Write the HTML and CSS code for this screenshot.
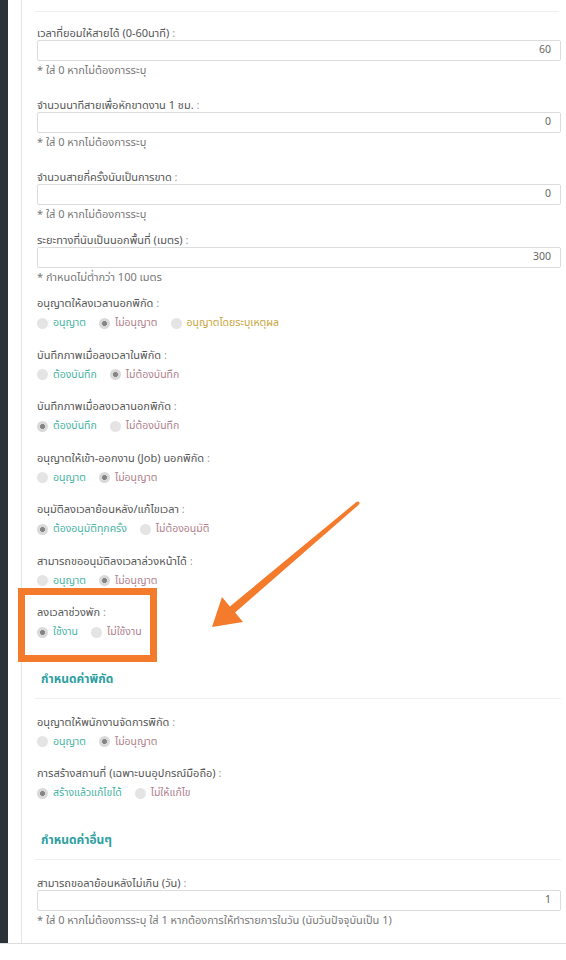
FILE: index.html
```html
<!DOCTYPE html>
<html lang="th">
<head>
<meta charset="utf-8">
<title>ตั้งค่า</title>
<link rel="stylesheet" href="styles.css">
</head>
<body>
<div class="screen">
  <aside class="rail"></aside>
  <main class="panel">
    <div class="content">
      <div class="rule"></div>

      <div class="field">
        <div class="label">เวลาที่ยอมให้สายได้ (0-60นาที) <span class="colon">:</span></div>
        <div class="input">60</div>
        <div class="help">* ใส่ 0 หากไม่ต้องการระบุ</div>
      </div>

      <div class="field">
        <div class="label">จำนวนนาทีสายเพื่อหักขาดงาน 1 ชม. <span class="colon">:</span></div>
        <div class="input">0</div>
        <div class="help">* ใส่ 0 หากไม่ต้องการระบุ</div>
      </div>

      <div class="field field-tight">
        <div class="label">จำนวนสายกี่ครั้งนับเป็นการขาด <span class="colon">:</span></div>
        <div class="input">0</div>
        <div class="help">* ใส่ 0 หากไม่ต้องการระบุ</div>
      </div>

      <div class="field field-tight">
        <div class="label">ระยะทางที่นับเป็นนอกพื้นที่ (เมตร) <span class="colon">:</span></div>
        <div class="input">300</div>
        <div class="help">* กำหนดไม่ต่ำกว่า 100 เมตร</div>
      </div>

      <div class="choice">
        <div class="label">อนุญาตให้ลงเวลานอกพิกัด <span class="colon">:</span></div>
        <div class="options">
          <span class="opt"><span class="dot"></span><span class="t-yes">อนุญาต</span></span>
          <span class="opt"><span class="dot on"></span><span class="t-no">ไม่อนุญาต</span></span>
          <span class="opt"><span class="dot"></span><span class="t-gold">อนุญาตโดยระบุเหตุผล</span></span>
        </div>
      </div>

      <div class="choice">
        <div class="label">บันทึกภาพเมื่อลงเวลาในพิกัด <span class="colon">:</span></div>
        <div class="options">
          <span class="opt"><span class="dot"></span><span class="t-yes">ต้องบันทึก</span></span>
          <span class="opt"><span class="dot on"></span><span class="t-no">ไม่ต้องบันทึก</span></span>
        </div>
      </div>

      <div class="choice">
        <div class="label">บันทึกภาพเมื่อลงเวลานอกพิกัด <span class="colon">:</span></div>
        <div class="options">
          <span class="opt"><span class="dot on"></span><span class="t-yes">ต้องบันทึก</span></span>
          <span class="opt"><span class="dot"></span><span class="t-no">ไม่ต้องบันทึก</span></span>
        </div>
      </div>

      <div class="choice">
        <div class="label">อนุญาตให้เข้า-ออกงาน (Job) นอกพิกัด <span class="colon">:</span></div>
        <div class="options">
          <span class="opt"><span class="dot"></span><span class="t-yes">อนุญาต</span></span>
          <span class="opt"><span class="dot on"></span><span class="t-no">ไม่อนุญาต</span></span>
        </div>
      </div>

      <div class="choice">
        <div class="label">อนุมัติลงเวลาย้อนหลัง/แก้ไขเวลา <span class="colon">:</span></div>
        <div class="options">
          <span class="opt"><span class="dot on"></span><span class="t-yes">ต้องอนุมัติทุกครั้ง</span></span>
          <span class="opt"><span class="dot"></span><span class="t-no">ไม่ต้องอนุมัติ</span></span>
        </div>
      </div>

      <div class="choice">
        <div class="label">สามารถขออนุมัติลงเวลาล่วงหน้าได้ <span class="colon">:</span></div>
        <div class="options">
          <span class="opt"><span class="dot"></span><span class="t-yes">อนุญาต</span></span>
          <span class="opt"><span class="dot on"></span><span class="t-no">ไม่อนุญาต</span></span>
        </div>
      </div>

      <div class="choice">
        <div class="label">ลงเวลาช่วงพัก <span class="colon">:</span></div>
        <div class="options">
          <span class="opt"><span class="dot on"></span><span class="t-yes">ใช้งาน</span></span>
          <span class="opt"><span class="dot"></span><span class="t-no">ไม่ใช้งาน</span></span>
        </div>
      </div>

      <h3 class="section">กำหนดค่าพิกัด</h3>

      <div class="choice">
        <div class="label">อนุญาตให้พนักงานจัดการพิกัด <span class="colon">:</span></div>
        <div class="options">
          <span class="opt"><span class="dot"></span><span class="t-yes">อนุญาต</span></span>
          <span class="opt"><span class="dot on"></span><span class="t-no">ไม่อนุญาต</span></span>
        </div>
      </div>

      <div class="choice">
        <div class="label">การสร้างสถานที่ (เฉพาะบนอุปกรณ์มือถือ) <span class="colon">:</span></div>
        <div class="options">
          <span class="opt"><span class="dot on"></span><span class="t-yes">สร้างแล้วแก้ไขได้</span></span>
          <span class="opt"><span class="dot"></span><span class="t-no">ไม่ให้แก้ไข</span></span>
        </div>
      </div>

      <h3 class="section">กำหนดค่าอื่นๆ</h3>

      <div class="field">
        <div class="label">สามารถขอลาย้อนหลังไม่เกิน (วัน) <span class="colon">:</span></div>
        <div class="input">1</div>
        <div class="help">* ใส่ 0 หากไม่ต้องการระบุ ใส่ 1 หากต้องการให้ทำรายการในวัน (นับวันปัจจุบันเป็น 1)</div>
      </div>
    </div>
  </main>
</div>

<div class="highlight"></div>
<svg class="arrow" width="566" height="960" viewBox="0 0 566 960" aria-hidden="true">
  <polygon points="357,501.5 229.9,606.5 222,597 212,627 243,622 235.1,612.5 359,504.5" fill="#f47a2c"/>
  <circle cx="358" cy="503" r="1.6" fill="#f47a2c"/>
</svg>
</body>
</html>
```

FILE: styles.css
```css
* { box-sizing: border-box; }

html, body {
  margin: 0;
  padding: 0;
  background: #ffffff;
}

body {
  font-family: "Noto Sans Thai", "Noto Sans", "DejaVu Sans", sans-serif;
  font-size: 11px;
  color: #555;
  position: relative;
  width: 566px;
  height: 960px;
  overflow: hidden;
}

.screen {
  display: flex;
  height: 944px;
  border-bottom: 1px solid #dcdcdc;
}

.rail {
  width: 8px;
  flex: none;
  background: #2d3239;
}

.panel {
  flex: 1;
  padding-left: 13px;
}

.content {
  height: 100%;
  border-left: 1px solid #e6e6e6;
  padding: 11px 5px 0 15px;
}

.rule {
  height: 1px;
  background: #efefef;
  margin: 0 2px 15px -2px;
}

.label {
  line-height: 13px;
  height: 13px;
  white-space: nowrap;
  color: #555;
}

.colon { color: #9a9a9a; }

.field { margin-bottom: 21px; }
.field-tight { margin-bottom: 12px; }

.input {
  height: 21px;
  border: 1px solid #dcdcdc;
  border-radius: 2px;
  text-align: right;
  padding-right: 9px;
  line-height: 19px;
  color: #666;
  font-size: 10.5px;
}

.help {
  margin-top: 3px;
  line-height: 14px;
  height: 14px;
  color: #777;
  white-space: nowrap;
}

.choice { margin-bottom: 17.5px; }

.options {
  margin-top: 5px;
  height: 16px;
  display: flex;
  align-items: center;
  gap: 13px;
  font-size: 10.5px;
}

.opt {
  display: inline-flex;
  align-items: center;
  gap: 5px;
}

.dot {
  width: 11px;
  height: 11px;
  border-radius: 50%;
  background: #e4e4e4;
  flex: none;
}

.dot.on {
  background: radial-gradient(circle, #858585 0 2.2px, #d9d9d9 2.8px);
}

.t-yes { color: #48b3a3; }
.t-no { color: #b07f8d; }
.t-gold { color: #c9a43c; }

.section {
  margin: 31px 0 16.5px -2px;
  padding: 0 0 11px 6px;
  font-size: 12px;
  line-height: 16px;
  font-weight: 700;
  color: #2e9f9f;
  border-bottom: 1px solid #efefef;
}

.highlight {
  position: absolute;
  left: 18px;
  top: 588px;
  width: 139px;
  height: 74px;
  border: 7px solid #f37b2b;
}

.arrow {
  position: absolute;
  left: 0;
  top: 0;
  pointer-events: none;
}
```
